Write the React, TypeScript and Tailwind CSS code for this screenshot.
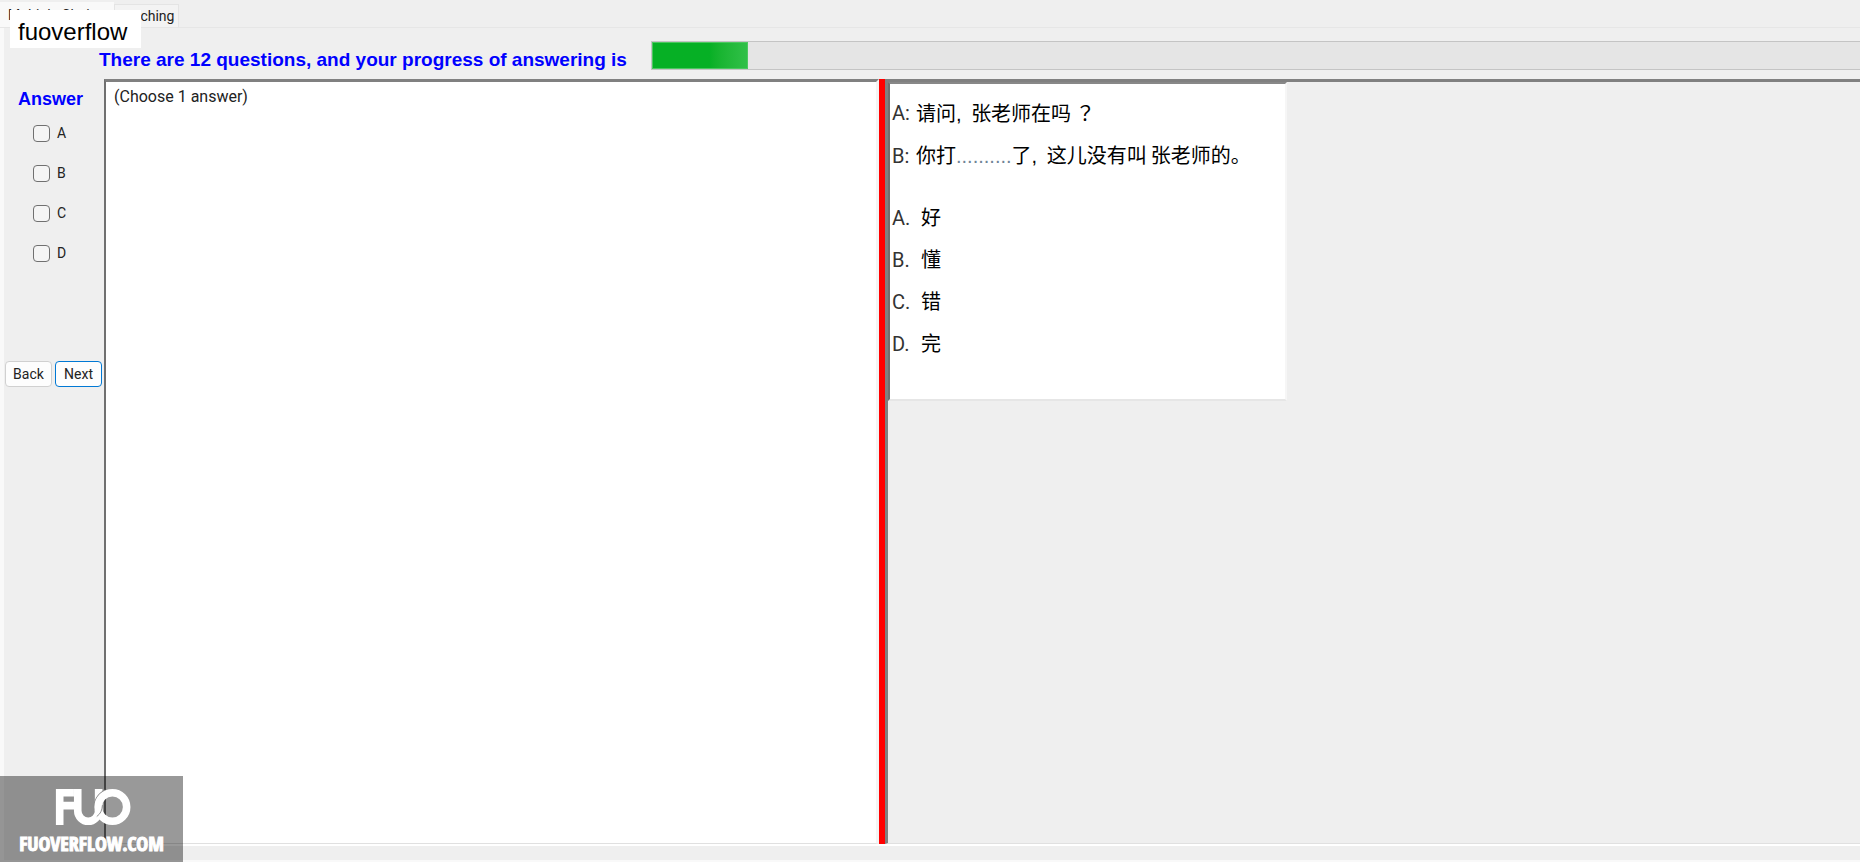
import { useState } from 'react';

const OPTIONS = ['A', 'B', 'C', 'D'];
const TOTAL_QUESTIONS = 12;

const CHOICES = [
  { label: 'A.', text: '好' },
  { label: 'B.', text: '懂' },
  { label: 'C.', text: '错' },
  { label: 'D.', text: '完' },
];

const Logo = () => (
  <svg width="82" height="40" viewBox="0 0 82 40" fill="none" stroke="#ffffff" strokeWidth="8" aria-label="FUO">
    <path d="M7 39V5H22M7 18.500H23" />
    <path d="M26 1V24A11 11 0 0 0 48 24V1" />
    <path d="M43.500 23A19.500 19.500 0 0 1 55 2" stroke="#8c8c8c" strokeWidth="1.200" />
    <circle cx="62.500" cy="20" r="15" />
    <path d="M46 30C50 27 51.500 24 52 18" stroke="#8c8c8c" strokeWidth="1" />
  </svg>
);

const Watermark = () => (
  <div className="absolute bottom-0 left-0 flex h-[86px] w-[183px] flex-col items-center bg-black/40 pt-3 text-white">
    <Logo />
    <span className="font-['Open_Sans_Condensed','Roboto_Condensed',sans-serif] text-[20px] leading-[36px] font-black [-webkit-text-stroke:1px_white]">
      FUOVERFLOW.COM
    </span>
  </div>
);

export default function App() {
  const [tab, setTab] = useState('choices');
  const [question, setQuestion] = useState(1);
  const [checked, setChecked] = useState<string[]>([]);

  const toggle = (option: string) => {
    setChecked(prev => (prev.includes(option) ? prev.filter(o => o !== option) : [...prev, option]));
  };

  return (
    <div className="relative flex min-h-screen flex-col bg-[#efefef] font-['Roboto',sans-serif] text-[#222222]">
      {/* Tabs */}
      <nav className="flex h-7 items-end border-b border-[#e6e6e6] text-[14px] leading-[18px]">
        <button
          onClick={() => setTab('choices')}
          className="h-[25px] w-[114px] bg-[#f9f9f9] pl-2 text-left whitespace-nowrap"
        >
          Multiple Choices
        </button>
        <button
          onClick={() => setTab('matching')}
          className="h-[23px] border border-b-0 border-[#e4e4e4] bg-[#f3f3f3] pr-1 pl-px"
        >
          Matching
        </button>
      </nav>
      <div className="absolute top-[10px] left-[10px] bg-white px-2 pt-2 pb-[2px] font-['Liberation_Sans',sans-serif] text-[24px] leading-[28px] text-black">
        <span className="block w-[115px]">fuoverflow</span>
      </div>

      <main className="flex grow flex-col border-b-2 border-l-4 border-[#f9f9f9]">
        {/* Progress */}
        <header className="flex h-[51px] items-start pt-[13px] pl-[95px]">
          <h1 className="w-[552px] pt-[9px] font-['Liberation_Sans',sans-serif] text-[19px] leading-[20px] font-bold whitespace-nowrap text-[#0000ff]">
            There are {TOTAL_QUESTIONS} questions, and your progress of answering is
          </h1>
          <div className="h-[29px] grow border-y border-l border-[#c4c4c4] bg-[#e5e5e5]">
            <div className="h-full w-[96px] border border-[#4cc860] bg-linear-to-r from-[#06b025] from-60% to-[#30c048]" />
          </div>
        </header>

        <div className="flex grow">
          {/* Answers */}
          <aside className="flex w-[100px] shrink-0 flex-col pt-[10px]">
            <h2 className="pl-[14px] font-['Liberation_Sans',sans-serif] text-[18px] leading-[20px] font-bold text-[#0000ff]">Answer</h2>
            <div className="flex flex-col gap-5 pt-[14px] pl-[29px]">
              {OPTIONS.map(option => (
                <label key={option} className="flex h-5 items-center gap-[7px] text-[14px]">
                  <input
                    type="checkbox"
                    checked={checked.includes(option)}
                    onChange={() => toggle(option)}
                    className="size-[17px] appearance-none rounded-[4px] border border-[#707070] bg-[#f5f5f5] checked:bg-[#0067c0]"
                  />
                  {option}
                </label>
              ))}
            </div>
            <div className="flex gap-[3px] pt-[98px] pl-px text-[14px] leading-[20px]">
              <button
                onClick={() => setQuestion(q => Math.max(1, q - 1))}
                className="h-[26px] w-[47px] rounded-[4px] border border-[#d0d0d0] bg-[#fdfdfd]"
              >
                Back
              </button>
              <button
                onClick={() => setQuestion(q => Math.min(TOTAL_QUESTIONS, q + 1))}
                className="h-[26px] w-[47px] rounded-[4px] border border-[#0078d4] bg-[#fdfdfd]"
              >
                Next
              </button>
            </div>
          </aside>

          {/* Question panes, split by the red bar */}
          <div className="mb-[14px] flex grow border-b-2 border-white">
            <section className="grow-[762] basis-0 border-t-[3px] border-r-[3px] border-b border-l-2 border-t-[#808080] border-r-[#f4f4f4] border-b-[#e0e0e0] border-l-[#707070] bg-white pt-[5px] pl-2 text-[16px] leading-[20px]">
              (Choose 1 answer)
            </section>
            <div className="w-[6px] shrink-0 bg-[#ff0000]" />
            <section
              aria-label={`Question ${question}`}
              className="grow-[972] basis-0 border-t-[3px] border-b border-l-[3px] border-t-[#808080] border-b-[#e0e0e0] border-l-[#808080]"
            >
              <article className="h-[319px] w-[399px] border-2 border-t-[#888888] border-r-[#f6f6f6] border-b-[#e6e6e6] border-l-[#707070] bg-white pt-2 pl-[2px] font-['Liberation_Sans','Noto_Sans_CJK_SC',sans-serif] text-[20px] leading-[42px] text-black">
                <p className="flex">
                  <span className="w-6 font-['Roboto',sans-serif] text-[#333333]">A:</span>
                  <span>
                    <span className="mr-1">请问, </span>
                    <span className="mr-1">张老师在吗</span>
                    <span className="font-['Noto_Sans_CJK_TC',sans-serif]">？</span>
                  </span>
                </p>
                <p className="flex">
                  <span className="w-6 font-['Roboto',sans-serif] text-[#333333]">B:</span>
                  <span>
                    你打<span className="text-[#6f8496]">..........</span>
                    <span className="mr-1">了, </span>
                    <span className="mr-1">这儿没有叫</span>
                    张老师的。
                  </span>
                </p>
                <div className="pt-5">
                  {CHOICES.map(choice => (
                    <p key={choice.label} className="flex">
                      <span className="w-[29px] font-['Roboto',sans-serif] text-[#333333]">{choice.label}</span>
                      <span>{choice.text}</span>
                    </p>
                  ))}
                </div>
              </article>
            </section>
          </div>
        </div>
      </main>

      <Watermark />
    </div>
  );
}
